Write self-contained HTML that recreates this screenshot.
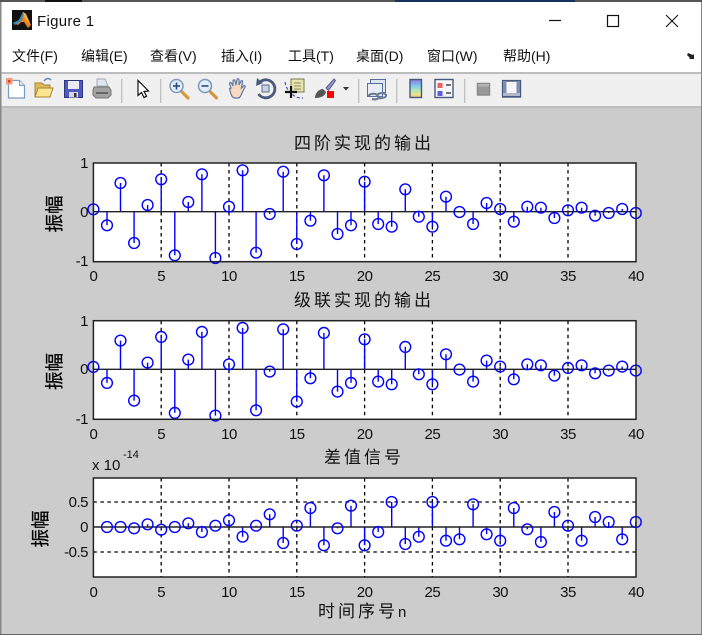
<!DOCTYPE html>
<html><head><meta charset="utf-8">
<style>
html,body{margin:0;padding:0;background:#ccc}
body{width:702px;height:635px;overflow:hidden;position:relative}
svg{position:absolute;left:0;top:0;display:block;filter:blur(.35px)}
text{font-family:"Liberation Sans","Noto Sans CJK SC",sans-serif}
.t{font-size:15px;fill:#111;letter-spacing:-.5px}
.m{font-size:14px;fill:#111}
.c{font-size:17px;fill:#111;letter-spacing:3px}
.y{font-size:18.5px;fill:#000;letter-spacing:0;stroke:#000;stroke-width:.25px}
.g{fill:none;stroke:#000;stroke-width:1.3;stroke-dasharray:3.5 3.5}
.a{fill:none;stroke:#222;stroke-width:1.5}
.s{fill:none;stroke:#00f;stroke-width:1.4}
.o circle{r:5.4px;fill:none;stroke:#00f;stroke-width:1.4}
</style></head>
<body>
<svg width="702" height="635" viewBox="0 0 702 635">
<rect width="702" height="635" fill="#ccc"/>
<!-- desktop remnants and window frame -->
<rect width="702" height="2" fill="#555"/>
<rect x="45" width="37" height="2" fill="#111"/><rect x="395" width="180" height="2" fill="#14335c"/>
<rect x="0" y="2" width="702" height="70" fill="#fff"/>
<rect x="0" y="72" width="702" height="2" fill="#bdbdbd"/>
<rect x="0" y="74" width="702" height="32" fill="#f0f0f0"/>
<rect x="0" y="106" width="702" height="2" fill="#bdbdbd"/>
<rect x="0" y="2" width="1.5" height="633" fill="#888"/>
<rect x="701" y="2" width="1" height="633" fill="#888"/>
<rect x="0" y="634" width="702" height="1" fill="#666"/>

<!-- title bar -->
<rect x="12" y="10" width="20" height="20" fill="#111"/>
<path d="M13 23l6-3 4-8 3 2 5 11-3 3-4-6-3 0-3 3z" fill="#e8821e"/>
<path d="M13 23l6-3 3-6 2-2-2 8-4 3-3 2z" fill="#2b8fc0"/>
<path d="M23 12l3 2 4 10-5-5z" fill="#f6b23c"/>
<text x="37" y="26" font-size="15" fill="#111" letter-spacing=".3">Figure 1</text>
<path d="M549 20.5h12" stroke="#111" stroke-width="1.2" fill="none"/>
<rect x="607.5" y="15.5" width="11" height="11" fill="none" stroke="#111" stroke-width="1.2"/>
<path d="M666 15l12 12M678 15l-12 12" stroke="#111" stroke-width="1.1" fill="none"/>

<!-- menu -->
<text class="m" x="12" y="61">文件(F)</text>
<text class="m" x="81" y="61">编辑(E)</text>
<text class="m" x="150" y="61">查看(V)</text>
<text class="m" x="221" y="61">插入(I)</text>
<text class="m" x="288" y="61">工具(T)</text>
<text class="m" x="356" y="61">桌面(D)</text>
<text class="m" x="427" y="61">窗口(W)</text>
<text class="m" x="503" y="61">帮助(H)</text>
<path d="M688 53l5 2 1-1v5h-5l1-1-3-3z" fill="#222"/>

<!-- toolbar icons -->
<path d="M8.5 80.500h11l5 5v12.500h-16z" fill="#fff" stroke="#7d9ac0" stroke-width="1.2"/>
<path d="M19.500 80.500v5h5" fill="#dfe8f3" stroke="#7d9ac0"/>
<rect x="6" y="78" width="6.500" height="6.500" fill="#f0a080"/><rect x="8" y="80" width="2.500" height="2.500" fill="#d8401c"/>
<path d="M35 83h7l2 2h6v12H35z" fill="#e0bc58" stroke="#a58330"/>
<path d="M35 97l3-9h15l-3 9z" fill="#fbe590" stroke="#a58330"/>
<path d="M44 81c2-3 5-3 7-1" fill="none" stroke="#6f8db3" stroke-width="1.6"/>
<rect x="64.500" y="80.500" width="18" height="17" fill="#5058c0" stroke="#2c3580"/>
<rect x="68" y="81" width="11" height="8" fill="#e9ebf5"/><rect x="69" y="92" width="9" height="5.500" fill="#d8d8e0"/><rect x="74" y="93" width="2.500" height="4" fill="#334"/>
<path d="M97 79h8l3 7H97z" fill="#dfe8f0" stroke="#a0aab8"/>
<path d="M94 87h15l2 3v5l-3 3H96l-3-3v-5z" fill="#a2a2a2" stroke="#777"/>
<rect x="96" y="92" width="12" height="2" fill="#666"/>
<rect x="121" y="79" width="1.400" height="24" fill="#c2c2c2"/>
<path d="M138 80.500v15l3.500-3 2.500 5 2.500-1.300-2.500-4.700 4.500-.5z" fill="#fff" stroke="#111" stroke-width="1.2"/>
<rect x="160" y="79" width="1.400" height="24" fill="#c2c2c2"/>
<g id="zi"><path d="M182 92l6 6" stroke="#d8953a" stroke-width="3.200" stroke-linecap="round"/>
<circle cx="176.500" cy="86" r="6.500" fill="#dfeefa" stroke="#7f9ab8" stroke-width="1.500"/>
<path d="M173 86h7" stroke="#2c4a86" stroke-width="1.600"/></g>
<path d="M176.500 82.500v7" stroke="#2c4a86" stroke-width="1.600"/>
<use href="#zi" x="28.500"/>
<path d="M231 88c-1-3-2-5-1-5.500s2 1 3 3.500l0-5c0-1.500 2-1.500 2 0l1 4 1-5c0-1.500 2-1.500 2 0l0 5 2-4c1-1 2 0 1.500 1l-1 6 2-2c1-1 2 0 1.500 1l-3 6c-1 3-2 5-4 5h-3c-3 0-4-3-5.500-9.500z" fill="#f6d9c0" stroke="#5d7aa8" stroke-width="1.200"/>
<path d="M260 82a9 9 0 1 1-1.500 12" fill="none" stroke="#4a5a7e" stroke-width="2.800"/>
<path d="M257 78l6 5-7 3z" fill="#4a5a7e"/>
<rect x="262" y="85" width="7" height="7" fill="#c8d4e4" stroke="#5a6a8a"/>
<rect x="291" y="79" width="13" height="13" fill="#e8e4b0" stroke="#7a7a50"/>
<path d="M294 83h7M294 86h7M294 89h7" stroke="#8a8a60"/>
<path d="M285 82c1 6 4 10 8 13s7 3 10 3" fill="none" stroke="#3030d0" stroke-dasharray="3 2"/>
<path d="M285 92h12M291 86v12" stroke="#111" stroke-width="2.200"/>
<path d="M326 88l8-9 1.500 1.500-7 10z" fill="#8d94c8" stroke="#5a6090"/>
<path d="M315 98c0-5 4-9 8-9l3 3c-1 4-5 6-11 6z" fill="#555"/>
<rect x="327" y="91" width="7" height="7" fill="#f00"/>
<path d="M343 87h6l-3 3.500z" fill="#333"/>
<rect x="358" y="79" width="1.400" height="24" fill="#c2c2c2"/>
<rect x="370.500" y="79.500" width="15" height="13" fill="#e0e6f0" stroke="#56709c"/>
<rect x="367.500" y="83.500" width="15" height="13" fill="#e8ecf4" stroke="#56709c"/>
<path d="M368 96c3-3 8-3 10 0s-3 4-6 3M377 95c3-3 8-2 9 0s-4 4-8 3" fill="none" stroke="#6a7890" stroke-width="2"/>
<rect x="396" y="79" width="1.400" height="24" fill="#c2c2c2"/>
<defs><linearGradient id="cb" x1="0" y1="0" x2="0" y2="1"><stop offset="0" stop-color="#8a7ae0"/><stop offset=".35" stop-color="#80c8e8"/><stop offset=".6" stop-color="#b0e8b0"/><stop offset=".85" stop-color="#f4e08c"/><stop offset="1" stop-color="#f0b080"/></linearGradient></defs>
<rect x="410" y="79.500" width="11.500" height="18" fill="url(#cb)" stroke="#46587e" stroke-width="1.400"/>
<rect x="435" y="79.500" width="18" height="18" fill="#f6f6fb" stroke="#46587e" stroke-width="1.400"/>
<rect x="437.500" y="83" width="5" height="5" fill="#f06060"/><rect x="437.500" y="91" width="5" height="5" fill="#5c5ce0"/>
<path d="M446 85h5M446 93h5" stroke="#222" stroke-width="1.300"/>
<rect x="464" y="79" width="1.400" height="24" fill="#c2c2c2"/>
<rect x="477.500" y="83.500" width="12" height="11.500" fill="#999" stroke="#8a8a8a" stroke-width="1.500"/>
<rect x="478" y="84" width="11" height="2.500" fill="#b5b5b5"/>
<rect x="502.800" y="80.800" width="17.500" height="16" fill="#f6f6fb" stroke="#46587e" stroke-width="1.800"/>
<rect x="503" y="81" width="3.500" height="15" fill="#7e8eb0"/><rect x="516.500" y="81" width="3.500" height="15" fill="#7e8eb0"/>
<rect x="503" y="93" width="17" height="3" fill="#b0b8c8"/>

<!-- axes backgrounds -->
<rect x="93.400" y="163" width="542.600" height="98.700" fill="#fff"/>
<rect x="93.400" y="320.700" width="542.600" height="98.600" fill="#fff"/>
<rect x="93.400" y="478" width="542.600" height="99" fill="#fff"/>

<!-- grid -->
<path class="g" d="M161.200 163V261.700M229 163V261.700M296.800 163V261.700M364.600 163V261.700M432.400 163V261.700M500.200 163V261.700M568 163V261.700"/>
<path class="g" d="M161.200 320.700V419.300M229 320.700V419.300M296.800 320.700V419.300M364.600 320.700V419.300M432.400 320.700V419.300M500.200 320.700V419.300M568 320.700V419.300"/>
<path class="g" d="M161.200 478V577M229 478V577M296.800 478V577M364.600 478V577M432.400 478V577M500.200 478V577M568 478V577M93.400 502H636M93.400 552H636"/>

<!-- axes 1 data -->
<g id="d1">
<path class="s" d="M93.400 211.700V209.300M107 211.700V225.300M120.500 211.700V183M134.100 211.700V243M147.600 211.700V205M161.200 211.700V179.300M174.800 211.700V255.300M188.300 211.700V202M201.900 211.700V174.300M215.400 211.700V258M229 211.700V206.700M242.600 211.700V170.300M256.100 211.700V252.700M269.700 211.700V214M283.200 211.700V171.700M296.800 211.700V244M310.400 211.700V220.700M323.900 211.700V175.300M337.500 211.700V234M351 211.700V225.300M364.600 211.700V181.700M378.200 211.700V224M391.700 211.700V226.700M405.300 211.700V189.300M418.800 211.700V216.700M432.400 211.700V226.700M446 211.700V196.700M459.500 211.700V212M473.100 211.700V224M486.600 211.700V203M500.200 211.700V209M513.800 211.700V221.700M527.300 211.700V206.700M540.900 211.700V207.700M554.400 211.700V218M568 211.700V210.300M581.600 211.700V207.700M595.100 211.700V215.700M608.700 211.700V213M622.200 211.700V209M635.800 211.700V213"/>
<path d="M93.400 211.700H636" fill="none" stroke="#222" stroke-width="1.400"/>
<g class="o">
<circle cx="93.400" cy="209.300"/><circle cx="107" cy="225.300"/><circle cx="120.500" cy="183"/><circle cx="134.100" cy="243"/><circle cx="147.600" cy="205"/><circle cx="161.200" cy="179.300"/><circle cx="174.800" cy="255.300"/><circle cx="188.300" cy="202"/><circle cx="201.900" cy="174.300"/><circle cx="215.400" cy="258"/><circle cx="229" cy="206.700"/><circle cx="242.600" cy="170.300"/><circle cx="256.100" cy="252.700"/><circle cx="269.700" cy="214"/><circle cx="283.200" cy="171.700"/><circle cx="296.800" cy="244"/><circle cx="310.400" cy="220.700"/><circle cx="323.900" cy="175.300"/><circle cx="337.500" cy="234"/><circle cx="351" cy="225.300"/><circle cx="364.600" cy="181.700"/><circle cx="378.200" cy="224"/><circle cx="391.700" cy="226.700"/><circle cx="405.300" cy="189.300"/><circle cx="418.800" cy="216.700"/><circle cx="432.400" cy="226.700"/><circle cx="446" cy="196.700"/><circle cx="459.500" cy="212"/><circle cx="473.100" cy="224"/><circle cx="486.600" cy="203"/><circle cx="500.200" cy="209"/><circle cx="513.800" cy="221.700"/><circle cx="527.300" cy="206.700"/><circle cx="540.900" cy="207.700"/><circle cx="554.400" cy="218"/><circle cx="568" cy="210.300"/><circle cx="581.600" cy="207.700"/><circle cx="595.100" cy="215.700"/><circle cx="608.700" cy="213"/><circle cx="622.200" cy="209"/><circle cx="635.800" cy="213"/>
</g>
</g>
<!-- axes 2 data -->
<use href="#d1" y="157.600"/>

<!-- axes 3 data -->
<path class="s" d="M161.200 527V529.700M147.600 527V524.300M134.100 527V528.300M188.300 527V523.300M201.900 527V532M215.400 527V525.700M229 527V520.300M242.600 527V536.700M256.100 527V525.700M269.700 527V514.300M283.200 527V543M296.800 527V525.700M310.400 527V508M323.900 527V545.300M337.500 527V528.300M351 527V505.700M364.600 527V545.300M378.200 527V532M391.700 527V502M405.300 527V544M418.800 527V536.700M432.400 527V502M446 527V540.700M459.500 527V539.300M473.100 527V504.300M486.600 527V534.300M500.200 527V540.700M513.800 527V508M527.300 527V529.300M540.900 527V542M554.400 527V512M568 527V525.700M581.600 527V540.700M595.100 527V517M608.700 527V522M622.200 527V539.300M635.800 527V522"/>
<path d="M93.400 527H636" fill="none" stroke="#222" stroke-width="1.400"/>
<g class="o">
<circle cx="107" cy="527"/><circle cx="120.500" cy="527"/><circle cx="134.100" cy="528.300"/><circle cx="147.600" cy="524.300"/><circle cx="161.200" cy="529.700"/><circle cx="174.800" cy="527"/><circle cx="188.300" cy="523.300"/><circle cx="201.900" cy="532"/><circle cx="215.400" cy="525.700"/><circle cx="229" cy="520.300"/><circle cx="242.600" cy="536.700"/><circle cx="256.100" cy="525.700"/><circle cx="269.700" cy="514.300"/><circle cx="283.200" cy="543"/><circle cx="296.800" cy="525.700"/><circle cx="310.400" cy="508"/><circle cx="323.900" cy="545.300"/><circle cx="337.500" cy="528.300"/><circle cx="351" cy="505.700"/><circle cx="364.600" cy="545.300"/><circle cx="378.200" cy="532"/><circle cx="391.700" cy="502"/><circle cx="405.300" cy="544"/><circle cx="418.800" cy="536.700"/><circle cx="432.400" cy="502"/><circle cx="446" cy="540.700"/><circle cx="459.500" cy="539.300"/><circle cx="473.100" cy="504.300"/><circle cx="486.600" cy="534.300"/><circle cx="500.200" cy="540.700"/><circle cx="513.800" cy="508"/><circle cx="527.300" cy="529.300"/><circle cx="540.900" cy="542"/><circle cx="554.400" cy="512"/><circle cx="568" cy="525.700"/><circle cx="581.600" cy="540.700"/><circle cx="595.100" cy="517"/><circle cx="608.700" cy="522"/><circle cx="622.200" cy="539.300"/><circle cx="635.800" cy="522"/>
</g>

<!-- axes frames -->
<rect class="a" x="93.400" y="163" width="542.600" height="98.700"/>
<rect class="a" x="93.400" y="320.700" width="542.600" height="98.600"/>
<rect class="a" x="93.400" y="478" width="542.600" height="99"/>

<!-- y tick labels -->
<g class="t" text-anchor="end">
<text x="88" y="168">1</text><text x="88" y="217">0</text><text x="88" y="266">-1</text>
<text x="88" y="326">1</text><text x="88" y="374">0</text><text x="88" y="424">-1</text>
<text x="88" y="507">0.5</text><text x="88" y="532">0</text><text x="88" y="557">-0.5</text>
</g>
<!-- x tick labels -->
<g class="t" text-anchor="middle">
<text x="93.400" y="281">0</text><text x="161.200" y="281">5</text><text x="229" y="281">10</text><text x="296.800" y="281">15</text><text x="364.600" y="281">20</text><text x="432.400" y="281">25</text><text x="500.200" y="281">30</text><text x="568" y="281">35</text><text x="636" y="281">40</text>
<text x="93.400" y="439">0</text><text x="161.200" y="439">5</text><text x="229" y="439">10</text><text x="296.800" y="439">15</text><text x="364.600" y="439">20</text><text x="432.400" y="439">25</text><text x="500.200" y="439">30</text><text x="568" y="439">35</text><text x="636" y="439">40</text>
<text x="93.400" y="597">0</text><text x="161.200" y="597">5</text><text x="229" y="597">10</text><text x="296.800" y="597">15</text><text x="364.600" y="597">20</text><text x="432.400" y="597">25</text><text x="500.200" y="597">30</text><text x="568" y="597">35</text><text x="636" y="597">40</text>
</g>
<text class="t" x="92" y="470" style="letter-spacing:0">x 10</text>
<text x="123" y="458" font-size="11" fill="#111">-14</text>

<!-- titles -->
<text class="c" x="294" y="149">四阶实现的输出</text>
<text class="c" x="294" y="306">级联实现的输出</text>
<text class="c" x="324" y="463">差值信号</text>
<text class="c" x="318" y="617">时间序号<tspan font-size="15" letter-spacing="0">n</tspan></text>
<text class="y" transform="translate(61,232.500) rotate(-90)">振幅</text>
<text class="y" transform="translate(61,390) rotate(-90)">振幅</text>
<text class="y" transform="translate(47,547.500) rotate(-90)">振幅</text>
</svg>
</body></html>
